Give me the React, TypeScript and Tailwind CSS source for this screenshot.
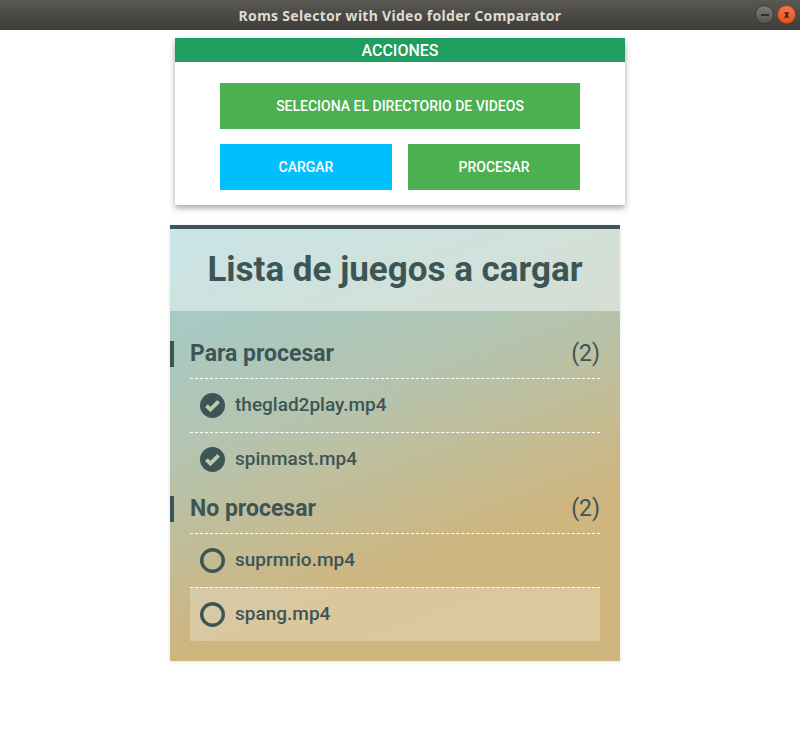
import React from "react";

function CheckCircle() {
  return (
    <svg width="25" height="25" viewBox="0 0 25 25" className="shrink-0">
      <circle cx="12.5" cy="12.5" r="12.5" fill="#3d5555" />
      <path d="M6.4 12.6 L10.4 16.6 L18.6 8.4" fill="none" stroke="#c0c8ad" strokeWidth="3.8" strokeLinecap="butt" strokeLinejoin="miter" />
    </svg>
  );
}

function RingCircle() {
  return (
    <svg width="25" height="25" viewBox="0 0 25 25" className="shrink-0">
      <circle cx="12.5" cy="12.5" r="10.8" fill="none" stroke="#3d5555" strokeWidth="3.4" />
    </svg>
  );
}

type Item = { name: string; done: boolean; hover?: boolean };

function Section({ title, items }: { title: string; items: Item[] }) {
  return (
    <div className="flex flex-col">
      <div className="flex h-[26px] items-center border-l-4 border-[#3d5555] pl-4 pr-5">
        <span className="flex-1 text-[23px] font-bold text-[#3d5555]">{title}</span>
        <span className="text-[23px] font-normal text-[#3d5555]">({items.length})</span>
      </div>
      <div className="mx-5 mt-[11px] mb-[10px] flex flex-col">
        {items.map((it) => (
          <div
            key={it.name}
            className={`flex h-[54px] items-center gap-[10px] border-t border-dashed border-white pl-[10px] ${it.hover ? "bg-white/25" : ""}`}
          >
            {it.done ? <CheckCircle /> : <RingCircle />}
            <span className="text-[19px] font-medium text-[#3d5555]">{it.name}</span>
          </div>
        ))}
      </div>
    </div>
  );
}

export default function App() {
  return (
    <div className="h-[730px] w-[800px] bg-white" style={{ fontFamily: "Roboto, 'Noto Sans', sans-serif" }}>
      {/* Title bar */}
      <div className="relative flex h-[30px] items-center justify-center bg-[linear-gradient(#5a5852,#3d3c38)]">
        <span className="text-[14px] font-bold tracking-[0.3px] text-[#dfdbd2]" style={{ fontFamily: "'Noto Sans', 'DejaVu Sans', sans-serif" }}>
          Roms Selector with Video folder Comparator
        </span>
        <div className="absolute right-[4px] top-[5px] flex items-center gap-[3px]">
          <div className="flex h-[19px] w-[19px] items-center justify-center rounded-full border border-[#3a3935] bg-[linear-gradient(#7a7873,#5a5852)]">
            <div className="h-[2px] w-[8px] bg-[#302f2c]" />
          </div>
          <div className="flex h-[19px] w-[19px] items-center justify-center rounded-full border border-[#a8401a] bg-[linear-gradient(#f37a4a,#e2521d)] text-[10px] font-bold leading-none text-[#3b1a0d]">
            x
          </div>
        </div>
      </div>

      {/* Acciones panel */}
      <div className="ml-[175px] mt-2 w-[450px] bg-white shadow-[0_3px_6px_rgba(0,0,0,0.35)]">
        <div className="flex h-[24px] items-center justify-center bg-[#1f9e5f] pt-[2px] text-[16px] font-medium text-white">
          ACCIONES
        </div>
        <div className="flex flex-col items-center gap-[15px] pb-[15px] pt-[21px]">
          <button className="flex h-[46px] w-[360px] items-center justify-center bg-[#4caf50] text-[14px] font-medium text-white">
            SELECIONA EL DIRECTORIO DE VIDEOS
          </button>
          <div className="flex w-[360px] gap-4">
            <button className="flex h-[46px] flex-1 items-center justify-center bg-[#00bfff] text-[14px] font-medium text-white">
              CARGAR
            </button>
            <button className="flex h-[46px] flex-1 items-center justify-center bg-[#4caf50] text-[14px] font-medium text-white">
              PROCESAR
            </button>
          </div>
        </div>
      </div>

      {/* Lista panel */}
      <div className="ml-[170px] mt-[20px] w-[450px] border-t-4 border-[#3f5454] bg-[linear-gradient(160deg,#9dcfd3_0%,#b4c4b0_38%,#cfb57e_72%,#cfb67e_100%)] shadow-[0_1px_4px_rgba(0,0,0,0.12)]">
        <div className="flex h-[82px] items-center justify-center bg-white/45">
          <span className="text-[35px] font-bold text-[#3d5555]">Lista de juegos a cargar</span>
        </div>
        <div className="flex flex-col pb-[10px] pt-[30px]">
          <Section
            title="Para procesar"
            items={[
              { name: "theglad2play.mp4", done: true },
              { name: "spinmast.mp4", done: true },
            ]}
          />
          <Section
            title="No procesar"
            items={[
              { name: "suprmrio.mp4", done: false },
              { name: "spang.mp4", done: false, hover: true },
            ]}
          />
        </div>
      </div>
    </div>
  );
}
